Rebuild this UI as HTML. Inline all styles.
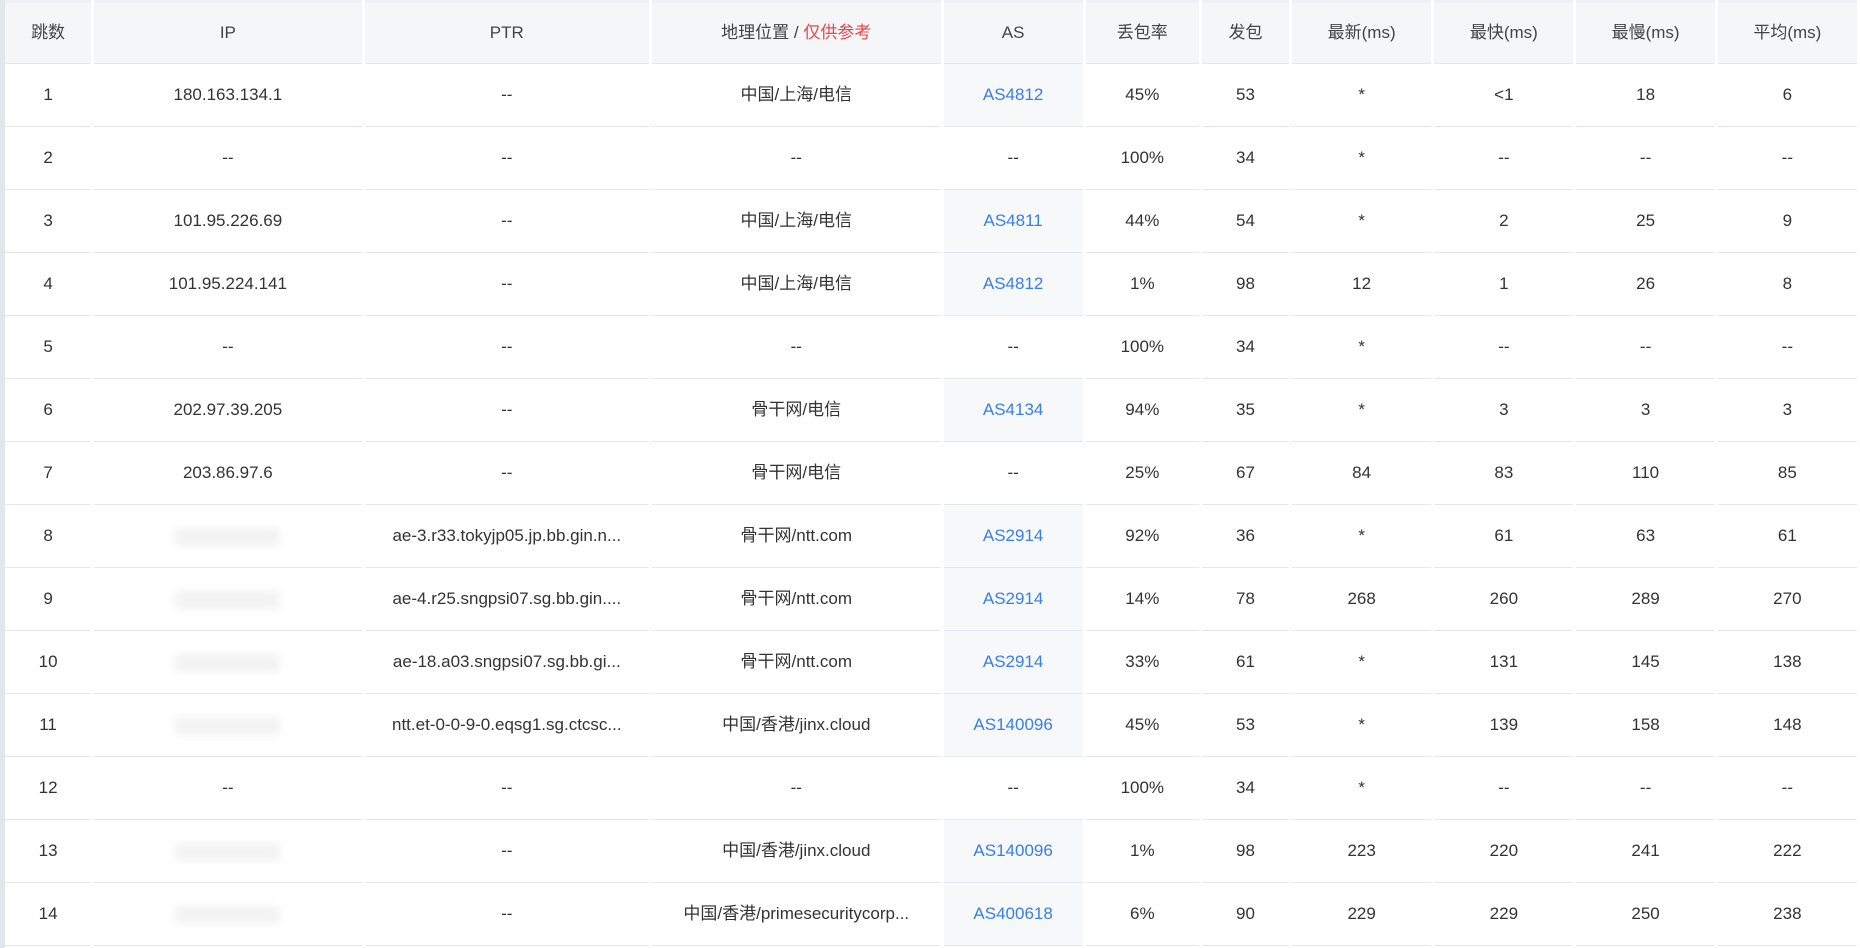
<!DOCTYPE html>
<html><head><meta charset="utf-8"><style>
html,body{margin:0;padding:0;background:#fff;width:1860px;height:948px;overflow:hidden}
body{border-left:5px solid #e3e6eb;box-sizing:border-box}
table{border-collapse:separate;border-spacing:3px 0;table-layout:fixed;width:1858px;margin-left:-3px;font-family:"Liberation Sans","Noto Sans CJK SC",sans-serif;font-size:17px;line-height:20px;color:#333}
th{background:#f5f6f7;font-weight:normal;height:60px;padding:0;border-top:3px solid #eef0f3;border-bottom:1px solid #e4e7ed;color:#444}
td{height:62px;padding:0;border-bottom:1px solid #e4e7ed;text-align:center;white-space:nowrap;overflow:hidden}
tr{height:63px}
td.as{background:#f6f8fa;color:#3a7ee6}
.r{color:#e5484d}
.bl{display:inline-block;width:105px;height:18px;background:#f3f3f3;filter:blur(4px);vertical-align:middle}
</style></head><body>
<table>
<colgroup><col style="width:86px"><col style="width:267px"><col style="width:284px"><col style="width:288px"><col style="width:139px"><col style="width:113px"><col style="width:87px"><col style="width:139px"><col style="width:139px"><col style="width:138px"><col style="width:139px"></colgroup>
<tr style="height:64px"><th>跳数</th><th>IP</th><th>PTR</th><th>地理位置 / <span class="r">仅供参考</span></th><th>AS</th><th>丢包率</th><th>发包</th><th>最新(ms)</th><th>最快(ms)</th><th>最慢(ms)</th><th>平均(ms)</th></tr>
<tr><td>1</td><td>180.163.134.1</td><td>--</td><td>中国/上海/电信</td><td class="as">AS4812</td><td>45%</td><td>53</td><td>*</td><td>&lt;1</td><td>18</td><td>6</td></tr>
<tr><td>2</td><td>--</td><td>--</td><td>--</td><td>--</td><td>100%</td><td>34</td><td>*</td><td>--</td><td>--</td><td>--</td></tr>
<tr><td>3</td><td>101.95.226.69</td><td>--</td><td>中国/上海/电信</td><td class="as">AS4811</td><td>44%</td><td>54</td><td>*</td><td>2</td><td>25</td><td>9</td></tr>
<tr><td>4</td><td>101.95.224.141</td><td>--</td><td>中国/上海/电信</td><td class="as">AS4812</td><td>1%</td><td>98</td><td>12</td><td>1</td><td>26</td><td>8</td></tr>
<tr><td>5</td><td>--</td><td>--</td><td>--</td><td>--</td><td>100%</td><td>34</td><td>*</td><td>--</td><td>--</td><td>--</td></tr>
<tr><td>6</td><td>202.97.39.205</td><td>--</td><td>骨干网/电信</td><td class="as">AS4134</td><td>94%</td><td>35</td><td>*</td><td>3</td><td>3</td><td>3</td></tr>
<tr><td>7</td><td>203.86.97.6</td><td>--</td><td>骨干网/电信</td><td>--</td><td>25%</td><td>67</td><td>84</td><td>83</td><td>110</td><td>85</td></tr>
<tr><td>8</td><td><span class="bl"></span></td><td>ae-3.r33.tokyjp05.jp.bb.gin.n...</td><td>骨干网/ntt.com</td><td class="as">AS2914</td><td>92%</td><td>36</td><td>*</td><td>61</td><td>63</td><td>61</td></tr>
<tr><td>9</td><td><span class="bl"></span></td><td>ae-4.r25.sngpsi07.sg.bb.gin....</td><td>骨干网/ntt.com</td><td class="as">AS2914</td><td>14%</td><td>78</td><td>268</td><td>260</td><td>289</td><td>270</td></tr>
<tr><td>10</td><td><span class="bl"></span></td><td>ae-18.a03.sngpsi07.sg.bb.gi...</td><td>骨干网/ntt.com</td><td class="as">AS2914</td><td>33%</td><td>61</td><td>*</td><td>131</td><td>145</td><td>138</td></tr>
<tr><td>11</td><td><span class="bl"></span></td><td>ntt.et-0-0-9-0.eqsg1.sg.ctcsc...</td><td>中国/香港/jinx.cloud</td><td class="as">AS140096</td><td>45%</td><td>53</td><td>*</td><td>139</td><td>158</td><td>148</td></tr>
<tr><td>12</td><td>--</td><td>--</td><td>--</td><td>--</td><td>100%</td><td>34</td><td>*</td><td>--</td><td>--</td><td>--</td></tr>
<tr><td>13</td><td><span class="bl"></span></td><td>--</td><td>中国/香港/jinx.cloud</td><td class="as">AS140096</td><td>1%</td><td>98</td><td>223</td><td>220</td><td>241</td><td>222</td></tr>
<tr><td>14</td><td><span class="bl"></span></td><td>--</td><td>中国/香港/primesecuritycorp...</td><td class="as">AS400618</td><td>6%</td><td>90</td><td>229</td><td>229</td><td>250</td><td>238</td></tr>
</table>
</body></html>
